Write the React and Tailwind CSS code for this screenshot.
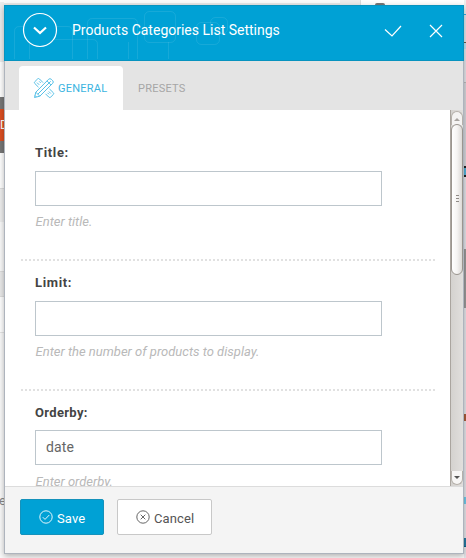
import React from 'react';

function PencilRuler() {
  return (
    <svg className="h-[22px] w-[22px] shrink-0" viewBox="0 0 22 22" fill="none" stroke="#45b9e3" strokeWidth="0.9">
      <path d="M10 5.600 6.500 2Q5.500 1 4.500 2L1.800 4.700Q.9 5.600 1.800 6.500L5.500 10.200M12.500 16.800 15.800 20.100Q16.800 21 17.700 20.100L20.300 17.500Q21.200 16.600 20.300 15.700L16.500 12" />
      <path d="m4 5.600 2.200 2.200M6.200 4.400l1.500 1.500M14.500 15.800l1.500 1.500M15.800 14.500l2 2" />
      <path d="M1.500 20.500 2.800 15.200 15.600 2.300Q17 1 18.300 2.300L19.700 3.700Q21 5 19.700 6.300L6.800 19.200ZM2.800 15.200l4 4M4.800 17.200 17.700 4.300M14 3.900l4.100 4.100M2 18.500 3.500 20" />
    </svg>
  );
}

function Header() {
  return (
    <header className="relative flex h-14 shrink-0 items-center border border-[#0793bf] bg-[#00a1d5] text-white">
      <svg className="absolute left-0 top-0 h-[54px] w-[458px]" fill="none" stroke="#fff" strokeOpacity=".09">
        <path d="M9.500 53V25.500Q9.500 20.500 14.500 20.500H62.500Q67.500 20.500 67.500 25.500V53M24.500 53V38.500Q24.500 33.500 29.500 33.500H87.500Q92.500 33.500 92.500 38.500V53M82.500 53V17.500Q82.500 12.500 87.500 12.500H127.500Q132.500 12.500 132.500 17.500V53M123.500 53V36" />
        <rect x="139.500" y="5.500" width="31" height="31" rx="5" />
        <path d="M163.500 53V36" />
        <rect x="191.500" y="16.500" width="23" height="22" rx="5" />
        <rect x="205.500" y="11.500" width="17" height="16" rx="5" />
      </svg>
      <svg className="relative -mt-[6px] ml-[17px] h-9 w-9" viewBox="0 0 36 36" fill="#00a1d5" stroke="#fff">
        <circle cx="18" cy="18" r="16.500" strokeWidth="1.200" />
        <path d="m12 15.500 6 5.500 6-5.500" strokeWidth="2.200" />
      </svg>
      <h1 className="relative -mt-[6px] ml-[14px] whitespace-nowrap text-[14px] leading-5">Products Categories List Settings</h1>
      <svg className="relative -mt-[4px] ml-auto h-[14px] w-[18px]" viewBox="0 0 18 14" fill="none" stroke="#fff" strokeWidth="1.200">
        <path d="m1 5.500 7 6.500L17 2" />
      </svg>
      <svg className="relative -mt-[4px] ml-[27px] mr-[20px] h-[14px] w-[14px]" viewBox="0 0 14 14" fill="none" stroke="#fff" strokeWidth="1.200">
        <path d="m1 1 12 12M13 1 1 13" />
      </svg>
    </header>
  );
}

function Tabs() {
  return (
    <nav className="flex h-[49px] shrink-0 items-end bg-[#e4e4e4] pl-[14px] text-[11px]">
      <div className="flex h-11 w-[104px] items-center rounded-t-[4px] bg-white pl-[14px] text-[#3cb4df]">
        <PencilRuler />
        <span className="ml-[3px] mt-[3px] tracking-[0.25px]">GENERAL</span>
      </div>
      <div className="flex h-11 items-center pl-[15px] text-[#a6a6a6]">
        <span className="mt-[3px] tracking-[0.25px]">PRESETS</span>
      </div>
    </nav>
  );
}

function Field({ label, value, hint, last }) {
  return (
    <section className="h-[130px]">
      <div className="pl-[14px]">
        <label className={`block h-5 pt-px text-[13px] font-bold leading-5 text-[#444] ${last ? 'tracking-[0.33px]' : 'tracking-[0.65px]'}`}>{label}</label>
        <div className={`${last ? 'mt-[8px]' : 'mt-[9px]'} flex h-[35px] w-[347px] items-center border border-[#bdc6cc] pl-[10px] text-[14px] tracking-[0.15px] text-[#666]`}>
          {value}
        </div>
        <p className={`${last ? 'mt-[7px]' : 'mt-[6px]'} h-5 pl-[0.5px] text-[13px] italic leading-5 text-[#b9b9b9]`}>{hint}</p>
      </div>
      {!last && <div className="mt-[27px] h-[2px] w-[415px] bg-[repeating-linear-gradient(90deg,#e1e1e1_0_2px,transparent_2px_4px)]" />}
    </section>
  );
}

function Scrollbar() {
  return (
    <div className="flex h-[376px] w-[13px] shrink-0 flex-col border-l border-[#aaa59f] bg-gradient-to-r from-[#d4d2cf] to-[#e1dfdd]">
      <div className="mt-px flex h-[14px] shrink-0 justify-center rounded-t-[6px] border border-b-0 border-[#b5b0aa] bg-[#f4f3f2] pt-[6px]">
        <svg className="h-[3px] w-[6px]" viewBox="0 0 6 3"><path d="M0 3 3 0l3 3z" fill="#a8a4a0" /></svg>
      </div>
      <div className="-mt-px flex h-[151px] shrink-0 flex-col items-center justify-center gap-[2px] rounded-[6px] border border-[#9a958f] bg-gradient-to-r from-white via-[#f5f4f3] to-[#dcd9d6] pb-[2px]">
        <i className="h-px w-[3px] bg-[#8f8b87]" />
        <i className="h-px w-[3px] bg-[#8f8b87]" />
        <i className="h-px w-[3px] bg-[#8f8b87]" />
      </div>
      <div className="mb-px mt-auto flex h-[14px] items-center justify-center rounded-b-[6px] border border-t-0 border-[#b5b0aa] bg-[#f7f6f5]">
        <svg className="h-[3px] w-[6px]" viewBox="0 0 6 3"><path d="M0 0h6L3 3z" fill="#555" /></svg>
      </div>
    </div>
  );
}

function Footer() {
  return (
    <footer className="flex h-[67px] shrink-0 items-start gap-[13px] border-t border-[#dcdcdc] bg-[#f4f4f4] pl-[15px] pt-[12px] text-[13px] tracking-[0.1px]">
      <button className="flex h-9 w-[84px] items-center rounded-[2px] border border-[#1592bb] bg-[#00a1d5] pl-[18px] text-white">
        <svg className="h-[14px] w-[14px]" viewBox="0 0 14 14" fill="none" stroke="#fff" strokeWidth=".9">
          <circle cx="7" cy="7" r="6.200" />
          <path d="m3.800 7.200 2.200 2.200 4.300-4.400" />
        </svg>
        <span className="ml-[4px] mt-[3px]">Save</span>
      </button>
      <button className="flex h-9 w-[95px] items-center rounded-[2px] border border-[#c8c8c8] bg-white pl-[18px] text-[#555]">
        <svg className="h-[14px] w-[14px]" viewBox="0 0 14 14" fill="none" stroke="#555" strokeWidth=".9">
          <circle cx="7" cy="7" r="6.200" />
          <path d="m4.700 4.700 4.600 4.600m0-4.600L4.700 9.300" />
        </svg>
        <span className="ml-[4px] mt-[3px]">Cancel</span>
      </button>
    </footer>
  );
}

function PageBehind() {
  return (
    <div className="absolute inset-0 flex justify-between overflow-hidden bg-[#fafafa] text-[12px]">
      <div className="w-1 overflow-hidden">
        <div className="h-[2px] bg-[#fafafa]" />
        <div className="h-[60px] bg-[#ececec]" />
        <div className="h-[35px] bg-white" />
        <div className="h-[56px] overflow-hidden border-y-[12px] border-[#777] bg-[#dc4f22] leading-[32px] text-white">D</div>
        <div className="h-[35px] bg-white" />
        <div className="h-[34px] border-t border-[#ddd] bg-[#eee]" />
        <div className="h-[49px] bg-[#fafafa]" />
        <div className="h-[26px] border-y border-[#ddd] bg-[#eaeaea]" />
        <div className="h-[36px] border-b border-[#e5e5e5] bg-white" />
        <div className="-ml-px mt-[158px] text-[13px] leading-5 text-[#888]">e</div>
      </div>
      <div className="h-[5px] flex-1">
        <div className="flex h-[5px]">
          <div className="h-[2px] w-[336px] bg-[#fafafa] shadow-[0_3px_0_#e9e9e9]" />
          <div className="w-[20px] bg-[#ececec]" />
          <div className="flex-1 border-l border-[#ddd] bg-white pl-[14px] pt-[3px]">
            <div className="h-[2px] w-[10px] rounded-t bg-[#777]" />
          </div>
        </div>
      </div>
      <div className="w-[2px] overflow-hidden bg-[#e5e5ea]">
        <div className="h-[14px] bg-[#eee]" />
        <div className="h-px bg-[#31aee4]" />
        <div className="mt-[27px] h-px bg-[#6b5a46]" />
        <div className="h-[6px] bg-[#bfe3f2]" />
        <div className="mt-[33px] h-px bg-[#bbb]" />
        <div className="h-[83px] bg-[#d7d7dc]" />
        <div className="h-[11px] border-y-2 border-[#222] bg-[#53b1d8]" />
        <div className="mt-[72px] h-[59px] bg-[#999]" />
        <div className="mt-[106px] h-[7px] bg-[#a85b3a]" />
        <div className="mt-[76px] h-[7px] bg-[#70c8e8]" />
        <div className="mt-[34px] h-[9px] border-b border-[#0b618c] bg-[#2779a0]" />
      </div>
    </div>
  );
}

export default function App() {
  return (
    <div className="relative h-[558px] w-[466px] overflow-hidden pl-1 pt-[5px] font-['Roboto',sans-serif]">
      <PageBehind />
      <main className="relative flex h-[549px] w-[460px] flex-col shadow-[0_2px_6px_rgba(0,0,0,0.3)]">
        <Header />
        <div className="flex h-[493px] flex-col border border-t-0 border-[#aeb4bd] bg-white">
          <Tabs />
          <div className="flex h-[376px] shrink-0 overflow-hidden">
            <div className="h-[376px] flex-1 overflow-hidden pl-4 pt-[32px]">
              <Field label="Title:" hint="Enter title." />
              <Field label="Limit:" hint="Enter the number of products to display." />
              <Field label="Orderby:" value="date" hint="Enter orderby." last />
            </div>
            <Scrollbar />
          </div>
          <Footer />
        </div>
      </main>
    </div>
  );
}
